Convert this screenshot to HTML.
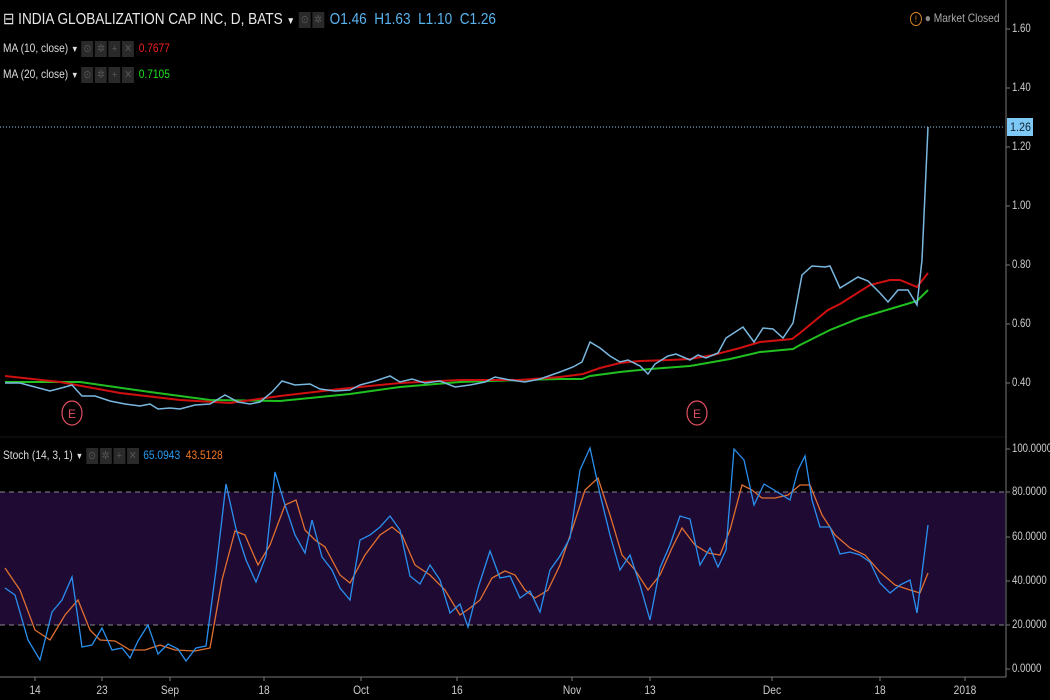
<!DOCTYPE html>
<html><head><meta charset="utf-8"><style>
body{margin:0;background:#000;width:1050px;height:700px;overflow:hidden;font-family:"Liberation Sans",sans-serif;position:relative}
.t{position:absolute;white-space:nowrap;color:#ddd;font-size:12px;transform:scaleX(.85);transform-origin:left}
.ax{position:absolute;left:1012px;color:#ccc;font-size:12px;transform:scaleX(.8);transform-origin:left;white-space:nowrap}
.btn{display:inline-block;width:14px;height:16px;background:#2a2a2a;margin-right:2px;vertical-align:middle;color:#555;font-size:11px;text-align:center;line-height:16px}
.xl{position:absolute;top:683px;color:#ccc;font-size:12px;transform:translateX(-50%) scaleX(.85)}
</style></head><body>
<div class="t" style="left:3px;top:9px;font-size:16px;color:#e8e8e8">⊟ INDIA GLOBALIZATION CAP INC, D, BATS <span style="font-size:10px">▼</span> <span class="btn">⊙</span><span class="btn">✲</span> <span style="color:#5ab4f0">O1.46&nbsp; H1.63&nbsp; L1.10&nbsp; C1.26</span></div>
<div class="t" style="left:3px;top:41px">MA (10, close) <span style="font-size:9px">▼</span> <span class="btn">⊙</span><span class="btn">✲</span><span class="btn">+</span><span class="btn">✕</span> <span style="color:#f02020">0.7677</span></div>
<div class="t" style="left:3px;top:67px">MA (20, close) <span style="font-size:9px">▼</span> <span class="btn">⊙</span><span class="btn">✲</span><span class="btn">+</span><span class="btn">✕</span> <span style="color:#20e020">0.7105</span></div>
<div class="t" style="left:3px;top:448px">Stoch (14, 3, 1) <span style="font-size:9px">▼</span> <span class="btn">⊙</span><span class="btn">✲</span><span class="btn">+</span><span class="btn">✕</span> <span style="color:#2a9cf0">65.0943</span>&nbsp; <span style="color:#f07820">43.5128</span></div>
<div class="t" style="left:910px;top:11px;color:#aaa"><span style="display:inline-block;width:12px;height:12px;border:1.5px solid #e08a30;border-radius:50%;color:#e08a30;font-size:9px;text-align:center;line-height:12px;vertical-align:middle">!</span> <span style="color:#888">●</span> Market Closed</div>
<svg width="1050" height="700" style="position:absolute;left:0;top:0;pointer-events:none">
<rect x="0" y="492" width="1005" height="133" fill="#1f0a33"/>
<line x1="0" y1="437" x2="1005" y2="437" stroke="#161616"/>
<line x1="0" y1="492" x2="1005" y2="492" stroke="#888" stroke-dasharray="5,4"/>
<line x1="0" y1="625" x2="1005" y2="625" stroke="#888" stroke-dasharray="5,4"/>
<line x1="1006" y1="0" x2="1006" y2="677" stroke="#777"/>
<line x1="0" y1="677" x2="1006" y2="677" stroke="#777"/>
<line x1="0" y1="127" x2="1005" y2="127" stroke="#8cc8f0" stroke-dasharray="1,2"/>
<rect x="1007" y="118" width="26" height="18" fill="#7ec8f5"/>
<text x="1010" y="131" font-size="12" fill="#123" font-family="Liberation Sans" textLength="21" lengthAdjust="spacingAndGlyphs">1.26</text>
<g stroke="#777">
<line x1="1006" y1="29" x2="1010" y2="29"/><line x1="1006" y1="88" x2="1010" y2="88"/><line x1="1006" y1="147" x2="1010" y2="147"/><line x1="1006" y1="206" x2="1010" y2="206"/><line x1="1006" y1="265" x2="1010" y2="265"/><line x1="1006" y1="324" x2="1010" y2="324"/><line x1="1006" y1="383" x2="1010" y2="383"/>
<line x1="1006" y1="449" x2="1010" y2="449"/><line x1="1006" y1="492" x2="1010" y2="492"/><line x1="1006" y1="537" x2="1010" y2="537"/><line x1="1006" y1="581" x2="1010" y2="581"/><line x1="1006" y1="625" x2="1010" y2="625"/><line x1="1006" y1="669" x2="1010" y2="669"/>
<line x1="35" y1="677" x2="35" y2="681"/><line x1="102" y1="677" x2="102" y2="681"/><line x1="170" y1="677" x2="170" y2="681"/><line x1="264" y1="677" x2="264" y2="681"/><line x1="361" y1="677" x2="361" y2="681"/><line x1="457" y1="677" x2="457" y2="681"/><line x1="572" y1="677" x2="572" y2="681"/><line x1="650" y1="677" x2="650" y2="681"/><line x1="772" y1="677" x2="772" y2="681"/><line x1="880" y1="677" x2="880" y2="681"/><line x1="965" y1="677" x2="965" y2="681"/>
</g>
<polyline fill="none" stroke="#20c020" stroke-width="2" points="5,382 80,382 150,392 210,400 280,401 350,394 400,387 460,382 520,380 560,379 582,379 590,376 620,372 650,369 690,366 730,359 760,352 793,349 800,345 830,330 860,318 870,315 890,309 917,301 928,290"/>
<polyline fill="none" stroke="#d01010" stroke-width="2" points="5,376 60,382 120,393 180,400 230,403 280,396 340,389 400,383 460,380 520,380 560,377 583,374 600,368 620,363 640,361 670,360 690,359 713,355 740,348 760,342 792,339 800,333 828,310 840,304 870,285 890,280 900,280 917,287 928,273"/>
<polyline fill="none" stroke="#7ab8e0" stroke-width="1.5" points="5,383 20,383 35,387 50,391 65,387 72,385 82,396 95,396 110,401 125,404 140,406 150,404 158,409 170,408 180,409 195,405 210,404 225,395 238,402 250,404 260,402 272,392 282,381 295,385 310,384 320,389 335,391 350,390 360,385 375,381 390,376 400,382 412,379 425,383 440,381 455,387 470,385 485,382 495,377 510,380 525,382 540,379 560,372 573,367 582,362 590,342 600,348 610,356 620,362 628,360 640,366 648,374 655,364 668,356 676,354 690,360 698,355 706,358 718,353 726,338 743,327 754,342 763,328 773,329 783,338 793,323 802,275 812,266 825,267 830,266 840,288 858,277 868,281 880,293 888,302 898,290 908,290 917,305 922,260 928,127"/>
<g fill="none" stroke="#e05060" stroke-width="1.2"><ellipse cx="72" cy="413" rx="10" ry="12"/><ellipse cx="697" cy="413" rx="10" ry="12"/></g>
<text x="68" y="418" font-size="12" fill="#e05060" font-family="Liberation Sans">E</text>
<text x="693" y="418" font-size="12" fill="#e05060" font-family="Liberation Sans">E</text>
<polyline fill="none" stroke="#e07030" stroke-width="1.3" points="5,568 20,590 35,630 50,640 65,615 78,600 90,630 100,640 115,641 130,650 145,650 160,645 175,650 195,651 210,648 222,580 235,531 245,535 258,565 270,545 285,505 296,500 305,530 315,540 325,547 340,575 350,583 365,555 380,535 392,527 402,535 415,565 430,575 445,590 460,615 470,608 480,600 492,578 505,571 515,575 525,590 535,598 548,590 560,565 572,530 585,490 598,478 610,515 622,555 635,570 648,590 660,575 672,548 682,528 695,545 708,553 720,555 730,530 742,485 752,490 762,498 775,498 788,495 800,485 810,485 822,515 835,535 850,548 865,555 880,572 895,585 910,590 920,593 928,573"/>
<polyline fill="none" stroke="#2a90f0" stroke-width="1.3" points="5,588 15,595 28,640 40,660 52,612 62,600 72,577 82,647 92,645 102,628 112,650 122,648 130,658 138,641 148,625 158,654 168,644 178,649 186,661 196,648 206,646 216,570 226,484 236,529 246,560 256,582 266,556 275,472 285,505 295,535 305,553 312,520 322,557 332,570 340,588 350,600 360,540 370,535 380,527 390,516 400,530 410,576 420,584 430,565 440,580 450,613 460,604 468,627 478,588 490,551 500,578 510,576 520,598 530,591 540,612 550,570 560,556 570,538 580,470 590,448 600,494 610,535 620,570 630,555 640,585 650,620 660,568 670,545 680,516 690,519 700,565 710,548 718,567 726,550 734,449 744,460 754,505 764,484 774,490 782,495 790,500 798,470 805,456 812,500 820,527 830,527 840,554 850,552 860,555 870,562 880,583 890,593 900,585 910,580 917,613 928,525"/>
</svg>
<div class="ax" style="top:21px">1.60</div><div class="ax" style="top:80px">1.40</div><div class="ax" style="top:139px">1.20</div><div class="ax" style="top:198px">1.00</div><div class="ax" style="top:257px">0.80</div><div class="ax" style="top:316px">0.60</div><div class="ax" style="top:375px">0.40</div>
<div class="ax" style="top:441px">100.0000</div><div class="ax" style="top:484px">80.0000</div><div class="ax" style="top:529px">60.0000</div><div class="ax" style="top:573px">40.0000</div><div class="ax" style="top:617px">20.0000</div><div class="ax" style="top:661px">0.0000</div>
<div class="xl" style="left:35px">14</div><div class="xl" style="left:102px">23</div><div class="xl" style="left:170px">Sep</div><div class="xl" style="left:264px">18</div><div class="xl" style="left:361px">Oct</div><div class="xl" style="left:457px">16</div><div class="xl" style="left:572px">Nov</div><div class="xl" style="left:650px">13</div><div class="xl" style="left:772px">Dec</div><div class="xl" style="left:880px">18</div><div class="xl" style="left:965px">2018</div>
</body></html>
